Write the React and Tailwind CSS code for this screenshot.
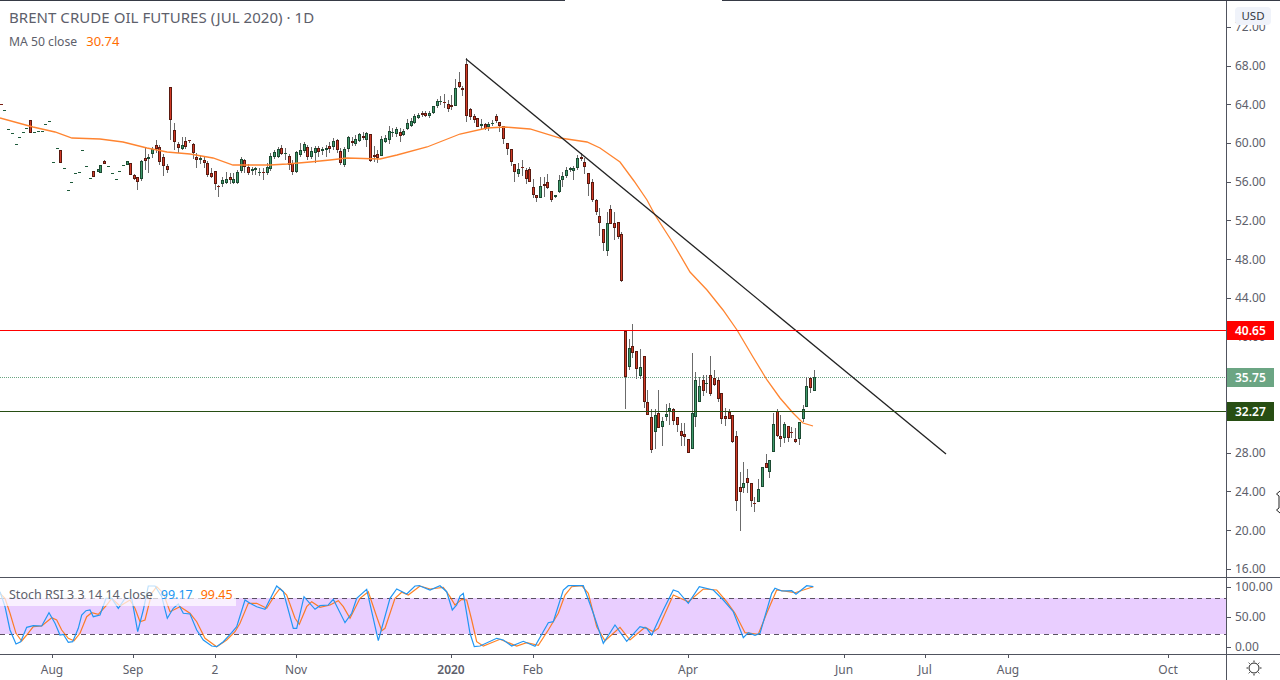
import { Fragment } from "react";

const priceFont = { fontFamily: '"Noto Sans", "Open Sans", sans-serif' };

// candles: [x, bodyTop, bodyBottom, wickTop, wickBottom, colour], read from 3x crops
const segA = [
  [2,312,314,0,0,"r"],[13,330,331,0,0,"g"],[25,388,389,0,0,"g"],[35,400,401,0,0,"g"],[47,433,434,0,0,"g"],[58,412,413,0,0,"g"],[70,397,398,0,0,"g"],[79,384,385,0,0,"g"],
  [91,360,400,0,0,"r"],[103,397,398,0,0,"g"],[114,394,395,0,0,"g"],[125,394,395,0,0,"g"],[136,372,373,0,0,"g"],[147,363,364,0,0,"g"],[158,487,488,0,0,"g"],[170,445,446,0,0,"g"],
  [181,450,488,0,0,"r"],[191,505,506,0,0,"g"],[203,570,571,0,0,"g"],[214,546,547,0,0,"g"],[225,519,520,0,0,"g"],[236,517,518,0,0,"g"],[247,451,452,0,0,"g"],[257,498,499,0,0,"g"],
  [269,534,535,0,0,"g"],[280,514,530,0,0,"r"],[293,506,515,0,0,"g"],[301,496,518,0,0,"g"],[313,483,491,480,493,"r"],[325,498,499,0,0,"g"],[335,519,520,0,0,"g"],[347,538,539,0,0,"g"],
  [358,514,515,0,0,"g"],[368,495,496,0,0,"g"],[380,484,494,0,0,"g"],[391,490,524,0,0,"r"],[401,525,536,522,540,"r"],[412,532,545,530,570,"r"],[424,484,536,480,542,"g"],[436,475,482,445,510,"r"],
  [445,472,476,462,520,"g"],[457,447,461,440,475,"g"],[469,436,448,420,460,"r"],[478,442,485,435,495,"r"],[490,471,497,462,527,"r"],[502,498,509,492,520,"r"],[511,262,359,262,420,"r"],[523,391,425,370,450,"r"],
  [535,433,445,425,460,"r"],[547,436,447,412,450,"g"],[556,424,440,412,448,"r"],[568,421,424,420,428,"r"],[580,433,460,430,478,"r"],[589,471,479,460,505,"r"],[601,474,479,465,492,"g"],[613,481,490,470,505,"r"],
  [622,490,526,484,530,"r"],[634,519,530,505,535,"r"],[646,514,553,512,570,"r"],[655,558,560,556,590,"r"],[667,541,551,530,562,"g"],[679,537,548,515,552,"g"],[691,532,539,520,552,"r"],[700,538,548,520,552,"g"],
  [712,517,549,510,552,"g"],[724,478,512,472,520,"g"],[733,481,500,478,520,"r"],[745,501,518,492,525,"r"],[757,506,514,500,525,"g"],[766,505,510,500,525,"g"],[778,515,516,505,528,"g"],[790,516,518,505,540,"r"],
  [802,502,518,490,525,"g"],[811,468,508,460,512,"g"],[823,456,472,450,478,"g"],[835,447,470,440,475,"g"],[844,445,461,435,465,"r"],[856,460,461,445,480,"g"],[868,468,496,462,510,"r"],[877,488,515,480,525,"r"],
  [889,456,515,452,520,"g"],[901,451,465,430,470,"g"],[913,433,454,425,460,"g"],[922,441,470,435,480,"r"],[934,453,470,440,478,"g"],[946,444,458,438,490,"g"],[955,445,455,438,470,"r"],[967,447,452,440,465,"g"],
  [979,443,451,435,470,"g"],[988,439,448,425,460,"r"],
];
const segB = [
  [10,303,320,295,330,"g"],[22,300,330,298,340,"r"],[31,333,368,325,375,"r"],[43,328,374,322,382,"g"],[55,292,328,288,335,"g"],[67,304,308,290,318,"r"],[76,298,311,285,318,"g"],[88,283,302,280,305,"g"],
  [100,289,293,275,300,"r"],[109,280,300,275,320,"g"],[121,283,362,281,365,"r"],[133,346,350,318,365,"r"],[142,343,353,330,368,"r"],[154,298,347,288,349,"g"],[166,294,305,285,310,"g"],[178,274,299,258,312,"g"],
  [187,276,279,265,290,"g"],[199,267,282,262,290,"g"],[211,277,287,265,305,"r"],[220,274,284,268,288,"g"],[232,250,267,238,270,"g"],[244,243,257,235,260,"g"],[253,229,249,222,252,"g"],[265,225,233,220,238,"g"],
  [277,220,224,212,230,"r"],[286,220,227,212,232,"r"],[298,220,227,213,235,"g"],[310,199,218,197,221,"g"],[322,184,197,178,205,"g"],[331,183,185,168,195,"g"],[343,185,188,162,205,"r"],[355,193,208,180,215,"r"],
  [364,196,200,165,210,"r"],[376,145,197,118,199,"g"],[388,127,140,97,143,"r"],[397,145,149,138,168,"r"],[409,72,227,55,245,"r"],[421,208,230,205,240,"r"],[433,229,239,222,250,"r"],[442,235,260,233,262,"r"],
  [454,253,257,238,268,"g"],[466,253,266,250,270,"r"],[475,252,260,245,272,"g"],[487,249,251,240,258,"g"],[499,229,244,222,248,"r"],[508,247,257,245,275,"r"],[520,259,296,258,312,"r"],[532,310,328,308,345,"r"],
  [544,328,367,326,378,"r"],[553,373,397,371,425,"r"],[565,388,401,370,410,"g"],[577,381,384,360,408,"r"],[589,390,416,383,432,"r"],[598,388,425,380,427,"r"],[610,442,464,418,475,"r"],[619,466,475,464,485,"r"],
  [631,439,473,410,475,"g"],[643,433,437,412,470,"r"],[652,427,445,402,447,"r"],[664,454,479,452,485,"r"],[676,466,472,464,474,"g"],[688,421,457,405,459,"g"],[697,408,419,395,440,"g"],[709,391,407,380,415,"g"],
  [721,385,389,380,395,"g"],[730,385,394,378,420,"g"],[742,355,385,345,390,"g"],[754,352,358,338,362,"r"],[763,367,382,355,402,"r"],[775,400,433,398,467,"r"],[787,427,479,418,487,"r"],[799,479,517,477,525,"r"],
  [808,529,550,505,587,"r"],[820,568,610,566,632,"r"],[832,550,632,515,647,"g"],[841,508,551,495,553,"r"],[853,550,563,516,600,"r"],[865,547,592,545,598,"r"],[874,583,722,576,725,"r"],
];
const segC = [
  [46,33,172,33,266,"r"],[58,85,140,57,150,"g"],[67,79,100,12,114,"r"],[79,94,146,92,176,"r"],[91,142,167,87,176,"g"],[103,109,247,107,263,"r"],[112,247,284,210,286,"r"],[124,292,389,268,398,"r"],
  [136,286,335,268,386,"g"],[145,280,323,210,325,"r"],[157,304,320,290,378,"g"],[169,283,290,252,303,"g"],[178,265,274,250,315,"g"],[190,268,302,265,315,"r"],[202,292,314,290,335,"r"],[214,334,347,310,377,"r"],
  [223,343,350,310,377,"r"],[235,358,398,356,400,"r"],[247,280,386,98,388,"g"],[256,181,290,157,320,"g"],[268,199,245,170,247,"g"],[280,181,212,165,228,"r"],[289,190,193,165,220,"g"],[301,166,221,108,228,"r"],
  [313,175,196,150,198,"r"],[325,181,236,170,245,"r"],[334,220,298,218,312,"r"],[346,289,296,265,318,"r"],[358,276,296,266,298,"r"],[367,286,365,284,368,"r"],[379,349,542,332,572,"r"],[391,502,515,457,632,"r"],
  [400,490,505,426,520,"g"],[412,475,490,448,520,"r"],[424,490,542,488,560,"r"],[433,549,551,530,575,"r"],[445,508,545,478,547,"g"],[457,442,500,440,502,"g"],[469,430,443,403,445,"r"],[478,421,455,419,473,"g"],
  [490,313,395,280,397,"g"],[502,274,349,268,351,"r"],[511,349,356,285,380,"r"],[523,313,353,305,368,"g"],[535,319,353,318,366,"r"],[544,337,340,320,355,"r"],[556,358,365,325,370,"r"],[568,307,356,305,375,"g"],
  [580,268,296,255,306,"g"],[589,199,260,172,262,"g"],[601,175,205,172,218,"r"],[613,172,212,150,214,"g"],
];

const fromCrop = (rows, ox, oy) =>
  rows.map(([x, t, b, wt, wb, c]) => ({
    x: Math.round(ox + x / 3),
    top: Math.round(oy + t / 3),
    bottom: Math.round(oy + b / 3),
    wickTop: wt ? Math.round(oy + wt / 3) : null,
    wickBottom: wb ? Math.round(oy + wb / 3) : null,
    color: c,
  }));

const candles = [...fromCrop(segA, 0, 0), ...fromCrop(segB, 330, 40), ...fromCrop(segC, 610, 320)];

const maLine =
  "0,118 33,127 55,132 72,138 100,139 123,142 147,148 167,152 190,154 213,158 233,165 253,165 270,165 287,164 310,162 330,160 347,158 380,159 397,155 427,147 460,134 487,128 505,127 530,129 560,138 587,142 600,148 620,162 634,181 647,200 655,215 673,243 690,272 707,290 723,310 737,330 753,357 767,380 780,398 793,413 803,423 813,426";

// stoch lines, crop coordinates
const pts = (list, ox) =>
  list
    .map(([x, y]) => `${(ox + x / 3).toFixed(1)},${(570 + y / 3).toFixed(1)}`)
    .join(" ");

const blueA = [[0,65],[15,110],[30,180],[48,222],[62,215],[80,172],[100,167],[125,168],[147,128],[165,160],[180,195],[190,193],[205,217],[218,215],[235,175],[245,135],[258,122],[270,120],[280,140],[300,135],[318,85],[335,85],[355,115],[375,85],[395,85],[413,185],[430,120],[445,48],[465,48],[485,80],[502,145],[520,115],[535,102],[550,130],[570,132],[590,180],[610,210],[635,228],[650,230],[670,215],[695,188],[710,170],[735,90],[750,100],[770,110],[795,118],[830,48],[850,65],[880,175],[890,175],[912,80],[945,118],[960,107],[985,105],[1000,88],[1035,158],[1055,130],[1070,85],[1100,58],[1135,212],[1170,85],[1190,57],[1220,72],[1245,48],[1260,47]];
const orangeA = [[0,70],[15,85],[30,130],[48,190],[65,213],[80,195],[100,170],[125,168],[155,143],[170,150],[185,180],[205,205],[222,212],[240,190],[260,140],[275,128],[295,133],[320,105],[335,85],[360,108],[390,90],[405,115],[420,155],[435,150],[455,70],[470,50],[490,70],[510,125],[540,110],[570,130],[590,155],[615,205],[650,230],[680,210],[705,185],[720,160],[745,100],[770,100],[800,115],[825,75],[840,55],[860,75],[885,145],[898,163],[920,110],[935,95],[960,112],[990,105],[1015,92],[1030,110],[1050,145],[1080,85],[1105,65],[1130,140],[1145,182],[1155,175],[1185,85],[1205,67],[1225,75],[1260,48]];
const blueB = [[0,48],[30,60],[60,47],[80,65],[97,120],[110,105],[120,78],[130,70],[150,190],[163,230],[180,228],[230,205],[250,210],[275,228],[310,214],[345,229],[385,158],[400,155],[430,60],[445,47],[490,47],[520,130],[550,220],[585,165],[620,214],[660,170],[680,175],[695,195],[730,120],[760,60],[775,65],[805,100],[838,50],[880,60],[910,90],[940,125],[970,203],[985,188],[1005,196],[1020,190],[1055,70],[1065,55],[1085,63],[1115,62],[1128,73],[1160,47],[1180,50]];
const orangeB = [[0,48],[30,57],[70,52],[90,80],[105,105],[125,88],[140,90],[155,150],[170,215],[190,228],[240,208],[290,228],[320,218],[355,226],[385,180],[415,130],[435,75],[455,50],[485,47],[505,70],[530,170],[555,212],[600,172],[630,210],[675,172],[700,185],[715,175],[760,75],[805,95],[850,57],[890,60],[920,95],[945,130],[975,188],[1015,193],[1040,130],[1070,60],[1125,68],[1180,50]];

const priceLabels = [72, 68, 64, 60, 56, 52, 48, 44, 40, 28, 24, 20, 16];
const priceY = (p) => 66 + (68 - p) * 9.68;

const timeLabels = [
  { x: 52, text: "Aug" },
  { x: 133, text: "Sep" },
  { x: 215, text: "2" },
  { x: 296, text: "Nov" },
  { x: 451, text: "2020", bold: true },
  { x: 533, text: "Feb" },
  { x: 688, text: "Apr" },
  { x: 844, text: "Jun" },
  { x: 925, text: "Jul" },
  { x: 1008, text: "Aug" },
  { x: 1168, text: "Oct" },
];

const Candle = ({ c }) => {
  const red = c.color === "r";
  const thin = c.bottom - c.top < 2;
  return (
    <Fragment>
      {c.wickTop !== null && (
        <line x1={c.x + 0.5} x2={c.x + 0.5} y1={c.wickTop} y2={c.wickBottom} stroke="#6b6b6b" />
      )}
      {thin ? (
        <rect x={c.x - 1} y={c.top} width={3} height={1} fill={red ? "#7a1f14" : "#1d5a3a"} />
      ) : (
        <rect
          x={c.x - 0.5}
          y={c.top + 0.5}
          width={2}
          height={c.bottom - c.top - 1}
          fill={red ? "#d23a26" : "#3f9a6b"}
          stroke={red ? "#5a1a10" : "#1c4a32"}
        />
      )}
    </Fragment>
  );
};

const AxisLabel = ({ y, children }) => (
  <div
    className="absolute left-0 flex items-center text-[12px] leading-none text-[#5d606b]"
    style={{ top: y - 7, height: 14 }}
  >
    <span className="w-[4px] h-px bg-[#50535e] mr-[4px]"></span>
    {children}
  </div>
);

const PriceTag = ({ y, color, children }) => (
  <div
    className="absolute left-0 w-[47px] h-[19px] flex items-center pl-[8px] text-[12px] font-semibold text-white"
    style={{ top: y, backgroundColor: color }}
  >
    {children}
  </div>
);

export default function App() {
  return (
    <div className="w-[1280px] h-[680px] flex flex-col overflow-hidden bg-white" style={priceFont}>
      {/* top edge with the gap */}
      <div className="flex h-px shrink-0">
        <div className="w-[565px] bg-[#363a45]"></div>
        <div className="w-[157px] bg-white"></div>
        <div className="flex-1 bg-[#363a45]"></div>
      </div>

      {/* Price pane */}
      <div className="flex h-[577px] shrink-0 border-b border-[#50535e]">
        <div className="relative w-[1226px]">
          <svg width="1226" height="576" viewBox="0 1 1226 576" className="block">
            <line x1="0" x2="1226" y1="377.5" y2="377.5" stroke="#6ba583" strokeDasharray="1 1" />
            <g shapeRendering="crispEdges">
              {candles.map((c, i) => (
                <Candle key={i} c={c} />
              ))}
            </g>
            <polyline points={maLine} fill="none" stroke="#ff8430" strokeWidth="1.3" />
            <line x1="466" y1="59" x2="946" y2="454" stroke="#222" strokeWidth="1.3" />
            <line x1="0" x2="1226" y1="330.5" y2="330.5" stroke="#ff0000" />
            <line x1="0" x2="1226" y1="411.5" y2="411.5" stroke="#274e13" />
          </svg>
          <div className="absolute left-[9px] top-[5px] text-[15px] tracking-[0.05px] leading-[22px] text-[#5d606b]">
            BRENT CRUDE OIL FUTURES (JUL 2020) · 1D
          </div>
          <div className="absolute left-[9px] top-[31px] flex items-baseline gap-[9px] text-[12.2px] leading-[18px] text-[#5d606b]">
            <span>MA 50 close</span>
            <span className="text-[13px] text-[#ff6d00]">30.74</span>
          </div>
        </div>

        <div className="relative flex-1 border-l border-[#50535e]">
          {priceLabels.map((p) => (
            <AxisLabel key={p} y={priceY(p) - 1}>
              {p.toFixed(2)}
            </AxisLabel>
          ))}
          <div className="absolute left-[8px] top-[6px] w-[36px] h-[18px] flex items-center justify-center rounded-sm bg-[#f0f3fa] text-[11.5px] text-[#363a45]">
            USD
          </div>
          <PriceTag y={320} color="#ff0000">40.65</PriceTag>
          <PriceTag y={367} color="#6ba583">35.75</PriceTag>
          <PriceTag y={401} color="#274e13">32.27</PriceTag>
          <svg
            width="5"
            height="24"
            viewBox="0 0 5 24"
            className="absolute right-0 top-[489px]"
            fill="white"
            stroke="#222"
          >
            <path d="M5 1 L1.5 4 L4 6 L4 18 L1.5 20 L5 23" />
          </svg>
        </div>
      </div>

      {/* Stoch RSI pane */}
      <div className="flex h-[77px] shrink-0 border-b border-[#50535e]">
        <div className="relative w-[1226px]">
          <svg width="1226" height="76" viewBox="0 578 1226 76" className="block">
            <rect x="0" y="598" width="1226" height="36" fill="#e9ceff" />
            <line x1="0" x2="1226" y1="598.5" y2="598.5" stroke="#5b5163" strokeDasharray="5 4" />
            <line x1="0" x2="1226" y1="634.5" y2="634.5" stroke="#5b5163" strokeDasharray="5 4" />
            <polyline points={pts(orangeA, 0)} fill="none" stroke="#ff6d00" strokeOpacity="0.85" strokeWidth="1.2" />
            <polyline points={pts(orangeB, 420)} fill="none" stroke="#ff6d00" strokeOpacity="0.85" strokeWidth="1.2" />
            <polyline points={pts(blueA, 0)} fill="none" stroke="#2196f3" strokeWidth="1.2" />
            <polyline points={pts(blueB, 420)} fill="none" stroke="#2196f3" strokeWidth="1.2" />
          </svg>
          <div className="absolute left-0 top-[7px] w-[236px] h-[21px] bg-white/70 flex items-center gap-[8px] pl-[9px] text-[12.5px] text-[#5d606b]">
            <span>Stoch RSI 3 3 14 14 close</span>
            <span className="text-[#2196f3]">99.17</span>
            <span className="text-[#ff6d00]">99.45</span>
          </div>
        </div>
        <div className="relative flex-1 border-l border-[#50535e]">
          <AxisLabel y={9}>100.00</AxisLabel>
          <AxisLabel y={39}>50.00</AxisLabel>
          <AxisLabel y={69}>0.00</AxisLabel>
        </div>
      </div>

      {/* Time axis */}
      <div className="flex flex-1">
        <div className="relative w-[1226px]">
          {timeLabels.map((t) => (
            <div key={t.x + t.text} className="absolute top-0 flex flex-col items-center w-[40px]" style={{ left: t.x - 20 }}>
              <span className="w-px h-[3px] bg-[#50535e]"></span>
              <span className={`mt-[3px] text-[12px] leading-[18px] text-[#5d606b] ${t.bold ? "font-semibold" : ""}`}>
                {t.text}
              </span>
            </div>
          ))}
        </div>
        <div className="flex-1 border-l border-[#50535e] flex items-center justify-center">
          <svg width="16" height="16" viewBox="0 0 16 16" fill="none" stroke="#222" strokeWidth="1">
            <circle cx="8" cy="8" r="5" />
            <path d="M8 0.5v1.5M8 14v1.5M0.5 8h1.5M14 8h1.5M2.7 2.7l1 1M12.3 12.3l1 1M2.7 13.3l1-1M12.3 3.7l1-1" />
          </svg>
        </div>
      </div>
    </div>
  );
}
